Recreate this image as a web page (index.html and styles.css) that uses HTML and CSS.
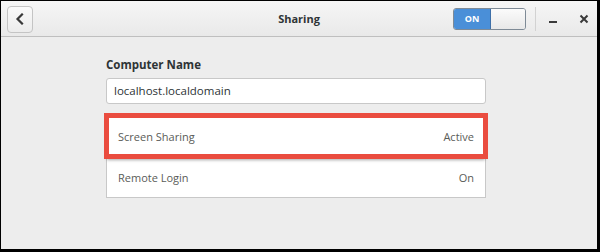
FILE: index.html
```html
<!DOCTYPE html>
<html>
<head>
<meta charset="utf-8">
<link rel="stylesheet" href="styles.css">
</head>
<body>
<div class="window">
  <header class="headerbar">
    <div class="hb-left">
      <button class="back-btn" aria-label="Back">
        <svg width="10" height="12" viewBox="0 0 10 12"><polyline points="7,1.5 2.5,6 7,10.5" fill="none" stroke="#3a3a3a" stroke-width="2.2" stroke-linecap="square"/></svg>
      </button>
    </div>
    <div class="title">Sharing</div>
    <div class="hb-right">
      <div class="switch"><span class="switch-on">ON</span><span class="switch-knob"></span></div>
      <span class="sep"></span>
      <span class="wbtn">
        <svg width="10" height="10" viewBox="0 0 10 10"><rect x="1" y="7" width="8" height="2" fill="#3a3a3a"/></svg>
      </span>
      <span class="wbtn">
        <svg width="10" height="10" viewBox="0 0 10 10"><path d="M1.5 1.5 L8.5 8.5 M8.5 1.5 L1.5 8.5" stroke="#3a3a3a" stroke-width="2"/></svg>
      </span>
    </div>
  </header>
  <main class="content">
    <div class="column">
      <div class="label">Computer Name</div>
      <div class="entry">localhost.localdomain</div>
      <div class="list">
        <div class="row highlighted"><span>Screen Sharing</span><span>Active</span></div>
        <div class="row"><span>Remote Login</span><span>On</span></div>
      </div>
    </div>
  </main>
</div>
</body>
</html>
```

FILE: styles.css
```css
html, body {
  margin: 0;
  padding: 0;
}
body {
  background: #000;
  width: 600px;
  height: 252px;
  overflow: hidden;
  font-family: "Open Sans", "Noto Sans", sans-serif;
}
.window {
  margin: 1px 3px 3px 1px;
  height: 248px;
  background: #ededed;
  display: flex;
  flex-direction: column;
}
.headerbar {
  height: 35px;
  border-bottom: 1px solid #bfbfbf;
  background: linear-gradient(#f6f6f6, #e9e9e9);
  display: grid;
  grid-template-columns: 1fr auto 1fr;
  align-items: center;
}
.hb-left {
  padding-left: 6px;
  display: flex;
}
.back-btn {
  width: 26px;
  height: 27px;
  padding: 0;
  border: 1px solid #c4c4c4;
  border-radius: 4px;
  background: linear-gradient(#fafafa, #ececec);
  display: flex;
  align-items: center;
  justify-content: center;
  margin-top: 1px;
}
.title {
  font-weight: 700;
  font-size: 11px;
  color: #2e3436;
}
.hb-right {
  display: flex;
  align-items: center;
  justify-content: flex-end;
  padding-right: 2px;
}
.switch {
  width: 71px;
  height: 20px;
  border: 1px solid #7e8a96;
  border-radius: 3px;
  display: flex;
  overflow: hidden;
  background: #f2f2f2;
}
.switch-on {
  width: 36px;
  background: #4a8fd8;
  color: #fff;
  font-size: 9px;
  font-weight: 700;
  display: flex;
  align-items: center;
  justify-content: center;
  border-right: 1px solid #3d6fa8;
}
.switch-knob {
  flex: 1;
  background: linear-gradient(#fbfbfb, #e8e8e8);
}
.sep {
  width: 1px;
  height: 24px;
  background: #d2d2d2;
  margin: 0 6px 0 9px;
}
.wbtn {
  width: 22px;
  height: 22px;
  display: flex;
  align-items: center;
  justify-content: center;
}
.wbtn + .wbtn {
  margin-left: 9px;
}
.content {
  flex: 1;
  padding-top: 20px;
}
.column {
  width: 380px;
  margin-left: 105px;
}
.label {
  font-size: 11.5px;
  font-weight: 700;
  color: #2e3436;
  line-height: 16px;
}
.entry {
  margin-top: 5px;
  height: 24px;
  border: 1px solid #c8c8c8;
  border-radius: 3px;
  background: #fff;
  font-size: 11.5px;
  color: #2e3436;
  line-height: 24px;
  padding-left: 7px;
}
.list {
  margin-top: 11px;
  border: 1px solid #c8c8c8;
  background: #fff;
}
.row {
  height: 40px;
  display: flex;
  align-items: center;
  justify-content: space-between;
  padding: 0 11px;
  font-size: 11px;
  color: #5a5c58;
}
.row + .row {
  border-top: 1px solid #d8d8d8;
}
.row.highlighted {
  position: relative;
  outline: 5px solid #ea4c3f;
  outline-offset: -2px;
  box-shadow: 0 4px 3px rgba(0, 0, 0, 0.35);
  z-index: 1;
}
```
